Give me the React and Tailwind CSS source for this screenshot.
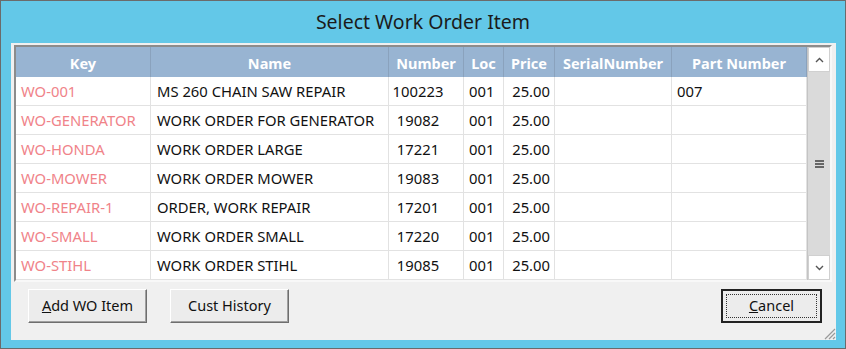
import React from 'react'

const cols = [
  { key: 'key', title: 'Key', w: 'w-[135px]', cell: 'pl-[5px] text-left text-[#f08389]' },
  { key: 'name', title: 'Name', w: 'w-[238px]', cell: 'pl-[6px] text-left' },
  { key: 'num', title: 'Number', w: 'w-[75px]', cell: 'pr-[16px] text-center' },
  { key: 'loc', title: 'Loc', w: 'w-[40px]', cell: 'pl-[5px] text-left' },
  { key: 'price', title: 'Price', w: 'w-[51px]', cell: 'pr-[4px] text-right' },
  { key: 'serial', title: 'SerialNumber', w: 'w-[117px]', cell: 'pl-[5px] text-left' },
  { key: 'part', title: 'Part Number', w: 'w-[135px]', cell: 'pl-[5px] text-left' },
]

const rows = [
  { key: 'WO-001', name: 'MS 260 CHAIN SAW REPAIR', num: '100223', loc: '001', price: '25.00', serial: '', part: '007' },
  { key: 'WO-GENERATOR', name: 'WORK ORDER FOR GENERATOR', num: '19082', loc: '001', price: '25.00', serial: '', part: '' },
  { key: 'WO-HONDA', name: 'WORK ORDER LARGE', num: '17221', loc: '001', price: '25.00', serial: '', part: '' },
  { key: 'WO-MOWER', name: 'WORK ORDER MOWER', num: '19083', loc: '001', price: '25.00', serial: '', part: '' },
  { key: 'WO-REPAIR-1', name: 'ORDER, WORK REPAIR', num: '17201', loc: '001', price: '25.00', serial: '', part: '' },
  { key: 'WO-SMALL', name: 'WORK ORDER SMALL', num: '17220', loc: '001', price: '25.00', serial: '', part: '' },
  { key: 'WO-STIHL', name: 'WORK ORDER STIHL', num: '19085', loc: '001', price: '25.00', serial: '', part: '' },
]

const Button = ({ children, className = '' }) => (
  <button className={`h-[34px] bg-[#ececec] border border-t-white border-l-white border-r-[#6e6e6e] border-b-[#6e6e6e] shadow-[inset_-1px_-1px_0_#a0a0a0] text-[14.5px] text-[#111] ${className}`}>
    {children}
  </button>
)

const App = () => {
  return (
    <div className="w-[846px] h-[349px] bg-[#63c8e8] border border-[#6b6b6b] flex flex-col font-['Noto_Sans',sans-serif]">
      <div className="h-[42px] flex items-center justify-center text-[19.5px] text-[#1b1b1b]">
        Select Work Order Item
      </div>
      <div className="flex-1 ml-[10px] mr-[9px] mb-[8px] bg-[#f0f0f0] flex flex-col relative">
        <div className="ml-[3px] mr-[4px] mt-[2px] border-2 border-t-[#8c8c8c] border-l-[#8c8c8c] border-r-[#f8f8f8] border-b-[#f8f8f8] flex bg-white">
          <div className="flex-1 flex flex-col">
            <div className="flex h-[30px] bg-[#98b4d2]">
              {cols.map((c) => (
                <div key={c.key} className={`${c.w} shrink-0 border-r border-[#8aa2bd] flex items-center justify-center pt-[3px] text-white font-bold text-[14.5px]`}>
                  {c.title}
                </div>
              ))}
            </div>
            {rows.map((r, i) => (
              <div key={i} className="flex h-[29px] border-b border-[#e2e2e2]">
                {cols.map((c) => (
                  <div key={c.key} className={`${c.w} shrink-0 border-r border-[#e2e2e2] flex items-center text-[14.8px] text-[#111] whitespace-nowrap ${c.cell}`}>
                    <span className="w-full">{r[c.key]}</span>
                  </div>
                ))}
              </div>
            ))}
          </div>
          <div className="w-[23px] flex flex-col bg-[#dadada] border-l border-[#c4c4c4]">
            <div className="h-[25px] bg-white border border-[#d0d0d0] flex items-center justify-center">
              <svg width="9" height="6" viewBox="0 0 9 6"><path d="M1 5 L4.5 1.5 L8 5" stroke="#555" strokeWidth="1.4" fill="none" /></svg>
            </div>
            <div className="flex-1 flex items-center justify-center">
              <div className="flex flex-col gap-[1px]">
                <div className="w-[9px] h-[2px] bg-[#666]" />
                <div className="w-[9px] h-[2px] bg-[#666]" />
                <div className="w-[9px] h-[2px] bg-[#666]" />
              </div>
            </div>
            <div className="h-[25px] bg-white border border-[#d0d0d0] flex items-center justify-center">
              <svg width="9" height="6" viewBox="0 0 9 6"><path d="M1 1 L4.5 4.5 L8 1" stroke="#555" strokeWidth="1.4" fill="none" /></svg>
            </div>
          </div>
        </div>
        <div className="flex items-start mt-[7px] pl-[17px] pr-[14px]">
          <Button className="w-[119px]"><span className="underline">A</span>dd WO Item</Button>
          <Button className="w-[119px] ml-[23px]">Cust History</Button>
          <div className="flex-1" />
          <button className="w-[101px] h-[34px] bg-[#ececec] border-2 border-[#222] p-[3px] text-[14.5px] text-[#111]">
            <div className="w-full h-full border border-dotted border-[#333] flex items-center justify-center">
              <span><span className="underline">C</span>ancel</span>
            </div>
          </button>
        </div>
        <svg className="absolute right-0 bottom-0" width="14" height="14" viewBox="0 0 14 14">
          <path d="M13 3 L3 13 M13 7 L7 13 M13 11 L11 13" stroke="#9a9a9a" strokeWidth="1.2" />
        </svg>
      </div>
    </div>
  )
}

export default App
